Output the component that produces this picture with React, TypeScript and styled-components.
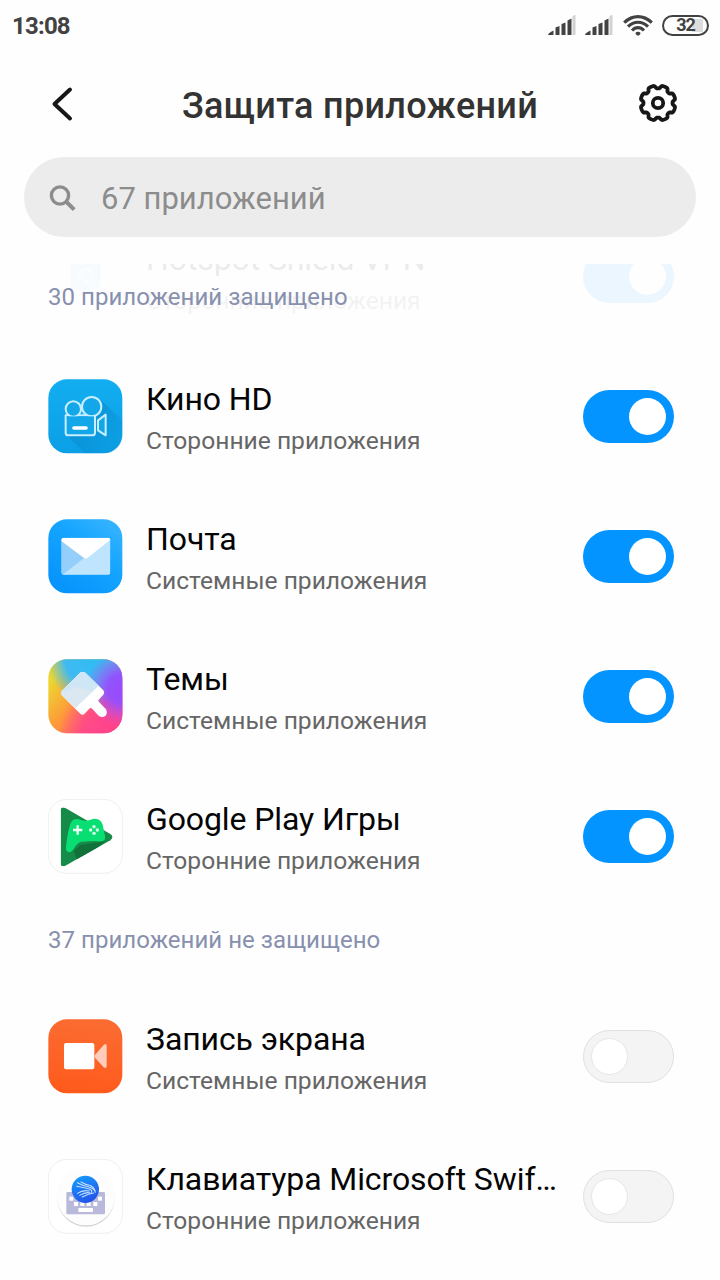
import React from 'react';
import styled, { createGlobalStyle } from 'styled-components';

const GlobalStyle = createGlobalStyle`
  *, *::before, *::after { box-sizing: border-box; }
  html, body { margin: 0; padding: 0; background: #fefefe; }
  body { font-family: Roboto, "Noto Sans", sans-serif; }
`;

const Screen = styled.main`
  width: 720px;
  height: 1280px;
  overflow: hidden;
  display: flex;
  flex-direction: column;
  background: #fefefe;
`;

const StatusBar = styled.header`
  height: 52px;
  flex: none;
  display: flex;
  align-items: center;
  justify-content: space-between;
  padding: 0 11px 0 12px;
`;

const Clock = styled.time`
  font-size: 24px;
  line-height: 28px;
  font-weight: 700;
  letter-spacing: -0.8px;
  color: #424242;
`;

const StatusIcons = styled.div`
  display: flex;
  align-items: center;
  svg { display: block; }
`;

const Signal = styled.svg`
  width: 28px;
  height: 22px;
  margin-right: 9px;
`;

const Wifi = styled.svg`
  width: 30px;
  height: 22px;
  margin: 0 9px 0 1px;
`;

const Battery = styled.div`
  width: 47px;
  height: 21px;
  margin-top: -1px;
  padding-bottom: 1px;
  border: 2px solid #424242;
  border-radius: 11px;
  display: flex;
  align-items: center;
  justify-content: center;
  font-size: 18px;
  font-weight: 700;
  line-height: 16px;
  letter-spacing: -1px;
  color: #424242;
  background: linear-gradient(#dcdcdc, #dcdcdc) 28px 2px / 11px 13px no-repeat;
`;

const TitleBar = styled.div`
  height: 105px;
  flex: none;
  display: flex;
  align-items: center;
  justify-content: space-between;
  padding: 0 40px 0 40px;
  svg { display: block; }
`;

const IconButton = styled.button<{ $lift: number }>`
  width: 44px;
  height: 44px;
  margin: 0 0 ${p => p.$lift}px;
  padding: 0;
  border: 0;
  background: none;
  display: block;
`;

const Title = styled.h1`
  margin: 3px 0 0;
  font-size: 36px;
  line-height: 44px;
  font-weight: 500;
  letter-spacing: 0.3px;
  color: #333;
  white-space: nowrap;
`;

const SearchBox = styled.div`
  flex: none;
  height: 80px;
  margin: 0 24px;
  padding: 3px 25px 0;
  border-radius: 40px;
  background: #ececec;
  display: flex;
  align-items: center;
  gap: 25px;
  font-size: 31px;
  line-height: 40px;
  color: #8c8c8c;
  svg { margin-top: -1px; }
`;

const List = styled.div`
  position: relative;
  flex: 1;
  min-height: 0;
  margin-top: 27px;
  overflow: hidden;
`;

const Rows = styled.div`
  margin-top: -58px;
`;

const SectionHeader = styled.h2<{ $pinned?: boolean }>`
  margin: 0;
  height: 80px;
  padding: 18px 48px 0;
  font-size: 24px;
  line-height: 32px;
  font-weight: 400;
  letter-spacing: 0.03px;
  color: #8790ae;
  ${p => p.$pinned && `
    position: absolute;
    z-index: 1;
    inset: 0 0 auto;
    padding-top: 17px;
    background: rgba(254, 254, 254, 0.925);
  `}
`;

const Row = styled.div`
  height: 140px;
  padding: 0 46px 0 48px;
  display: flex;
  align-items: center;
`;

const Tile = styled.svg`
  width: 75px;
  height: 75px;
  flex: none;
  display: block;
  margin-top: 1px;
`;

const Labels = styled.div`
  flex: 1;
  min-width: 0;
  margin-left: 23px;
  padding-right: 22px;
  padding-top: 3px;
`;

const Name = styled.div`
  font-size: 32px;
  line-height: 42px;
  letter-spacing: -0.1px;
  color: #050505;
  white-space: nowrap;
  overflow: hidden;
  text-overflow: ellipsis;
`;

const Kind = styled.div`
  font-size: 24.6px;
  line-height: 32px;
  margin-top: 5px;
  color: #666;
  white-space: nowrap;
`;

const Switch = styled.div<{ $on: boolean }>`
  width: 91px;
  height: 53px;
  margin-top: 1px;
  flex: none;
  display: flex;
  align-items: center;
  justify-content: ${p => (p.$on ? 'flex-end' : 'flex-start')};
  padding: 0 8px 0 7px;
  border-radius: 27px;
  background: ${p => (p.$on ? '#0394ff' : '#f4f4f4')};
  border: ${p => (p.$on ? '0' : '1px solid #e0e0e0')};
`;

const Knob = styled.span<{ $on: boolean }>`
  width: 37px;
  height: 37px;
  border-radius: 50%;
  background: #fff;
  border: ${p => (p.$on ? '0' : '1px solid #e6e6e6')};
`;

/* Launcher tiles share one 225-unit grid with a rounded square as their base. */
const Base = ({ fill, outlined }: { fill: string; outlined?: boolean }) => (
  <rect x="25" y="28" width="222" height="222" rx="56" fill={fill}
    stroke={outlined ? '#ececec' : 'none'} strokeWidth="2.5" />
);

const ShieldTile = () => (
  <Tile viewBox="24 27 225 225">
    <Base fill="#fff" />
    <path d="M91 70H182V158Q182 175 165 179L136 190L108 179Q91 175 91 158Z" fill="#a5d3fb" />
    <path d="M118 140Q120 114 142 116Q162 124 154 146Q144 158 130 152" fill="none" stroke="#d4ecff" strokeWidth="7" />
  </Tile>
);

const KinoTile = () => (
  <Tile viewBox="24 27 225 225">
    <defs>
      <linearGradient id="kino" x1="0" y1="0" x2="0" y2="1">
        <stop offset="0" stopColor="#12aef0" /><stop offset="1" stopColor="#0b9fe6" />
      </linearGradient>
      <linearGradient id="kinoShade" x1="0" y1="0" x2="1" y2="1">
        <stop offset="0" stopColor="#087fc0" stopOpacity=".7" /><stop offset="1" stopColor="#087fc0" stopOpacity="0" />
      </linearGradient>
    </defs>
    <Base fill="url(#kino)" />
    <path d="M180 88L247 151V194Q247 250 191 250H135L80 196L160 190Z" fill="url(#kinoShade)" />
    <g fill="#13a7ea" stroke="#c8efff" strokeWidth="6" strokeLinejoin="round">
      <path d="M77 136H165V188Q165 196 157 196H85Q77 196 77 188Z" />
      <circle cx="155" cy="110" r="29" />
      <circle cx="100" cy="117" r="23" />
      <path d="M174 151L197 134V196L174 181Z" />
    </g>
    <path d="M80 139H162V146H80Z" fill="#13a7ea" />
    <path d="M102 174H138" stroke="#fff" strokeWidth="11" strokeLinecap="round" />
  </Tile>
);

const MailTile = () => (
  <Tile viewBox="24 27 225 225">
    <defs>
      <linearGradient id="mail" x1=".9" y1="0" x2=".2" y2=".9">
        <stop offset="0" stopColor="#39b4ff" /><stop offset=".45" stopColor="#15a5ff" /><stop offset="1" stopColor="#0795fc" />
      </linearGradient>
      <clipPath id="envelope"><rect x="64" y="83" width="147" height="111" rx="8" /></clipPath>
    </defs>
    <Base fill="url(#mail)" />
    <g clipPath="url(#envelope)">
      <path d="M64 83H211V194H64Z" fill="#b5dffd" />
      <path d="M64 83L137 146L70 199H64Z" fill="#94cffc" />
      <path d="M211 83L68 194H211Z" fill="#bfe4fe" />
      <path d="M64 83H211V89L145 142Q137 149 129 142L64 93Z" fill="#fff" />
    </g>
  </Tile>
);

const ThemesTile = () => (
  <Tile viewBox="24 27 225 225">
    <defs>
      <linearGradient id="themes" x1="0" y1=".35" x2=".75" y2="1">
        <stop offset="0" stopColor="#edd52f" /><stop offset=".45" stopColor="#ff963b" /><stop offset="1" stopColor="#ff4589" />
      </linearGradient>
      <radialGradient id="themesBlue" cx=".6" cy="0" r=".62">
        <stop offset="0" stopColor="#2fbcf4" /><stop offset=".6" stopColor="#40baf1" /><stop offset="1" stopColor="#48baf1" stopOpacity="0" />
      </radialGradient>
      <radialGradient id="themesPurple" cx="1" cy=".4" r=".5">
        <stop offset="0" stopColor="#984aff" /><stop offset=".4" stopColor="#944fff" stopOpacity=".95" /><stop offset="1" stopColor="#bd4fea" stopOpacity="0" />
      </radialGradient>
      <radialGradient id="themesPink" cx=".9" cy="1" r=".75">
        <stop offset="0" stopColor="#ff438a" /><stop offset=".55" stopColor="#ff468c" stopOpacity=".85" /><stop offset="1" stopColor="#ff468c" stopOpacity="0" />
      </radialGradient>
      <clipPath id="brush"><path d="M120 68Q128 62 136 68L190 121Q195 128 190 134L176 149Q174 153 178 157L198 178Q204 190 196 198Q186 205 176 197L155 175Q151 173 147 177L134 191Q128 197 121 191L65 136Q60 130 65 123Z" /></clipPath>
    </defs>
    <Base fill="url(#themes)" />
    <Base fill="url(#themesPink)" />
    <Base fill="url(#themesBlue)" />
    <Base fill="url(#themesPurple)" />
    <g clipPath="url(#brush)">
      <path d="M55 55H215V210H55Z" fill="#fff" />
      <path d="M128 58L178 105L106 174L58 129Z" fill="#cfe6f7" />
      <path d="M60 129L106 174L158 124L110 110Z" fill="#dfe8f0" fillOpacity=".7" />
    </g>
  </Tile>
);

const PlayGamesTile = () => (
  <Tile viewBox="24 27 225 225">
    <defs>
      <clipPath id="playTriangle"><path d="M62 62Q62 48 76 54L211 132Q224 141 211 151L76 227Q62 233 62 219Z" /></clipPath>
    </defs>
    <Base fill="#fff" outlined />
    <g clipPath="url(#playTriangle)">
      <path d="M55 45H225V235H55Z" fill="#168a48" />
      <path d="M101 184L120 165L196 154L165 180L112 210Z" fill="#107239" />
    </g>
    <path d="M103 88Q113 85 121 89Q136 95 152 89Q162 84 173 88Q184 92 188 104L195 137Q198 153 183 154Q174 155 165 153Q151 154 126 155Q114 157 105 170Q96 187 86 187Q76 185 78 169Q82 132 90 105Q94 91 103 88Z" fill="#08de72" />
    <path d="M113 106V134M99 120H127" stroke="#effff3" strokeWidth="7" />
    <g fill="#dffff0">
      <circle cx="162" cy="110" r="5" /><circle cx="152" cy="120" r="5" />
      <circle cx="172" cy="120" r="5" /><circle cx="162" cy="130" r="5" />
    </g>
  </Tile>
);

const RecorderTile = () => (
  <Tile viewBox="24 27 225 225">
    <defs>
      <linearGradient id="recorder" x1=".6" y1="0" x2=".5" y2="1">
        <stop offset="0" stopColor="#fb6c32" /><stop offset="1" stopColor="#ff5a1c" />
      </linearGradient>
    </defs>
    <Base fill="url(#recorder)" />
    <rect x="72" y="99" width="91" height="79" rx="6" fill="#fff" />
    <path d="M165 135L191 105Q199 98 200 107V169Q199 178 191 172L165 143Q162 139 165 135Z" fill="#ffcdb9" />
  </Tile>
);

const SwiftKeyTile = () => (
  <Tile viewBox="24 27 225 225">
    <defs>
      <linearGradient id="swift" x1=".3" y1="0" x2=".7" y2="1">
        <stop offset="0" stopColor="#1598fc" /><stop offset="1" stopColor="#2550e8" />
      </linearGradient>
    </defs>
    <Base fill="#fff" outlined />
    <circle cx="138" cy="144" r="86" fill="#d3d3d6" />
    <circle cx="138" cy="139" r="87" fill="#fdfdfd" />
    <rect x="79" y="126" width="116" height="67" rx="4" fill="#b9badb" />
    <g fill="#fff">
      <rect x="88" y="140" width="12" height="12" /><rect x="174" y="140" width="12" height="12" />
      <rect x="102" y="156" width="12" height="12" /><rect x="121" y="156" width="12" height="12" />
      <rect x="140" y="156" width="12" height="12" /><rect x="160" y="156" width="12" height="12" />
      <rect x="115" y="174" width="44" height="12" rx="2" />
    </g>
    <circle cx="136" cy="118" r="41" fill="url(#swift)" />
    <g fill="none" stroke="#c4dfff" strokeWidth="3.2" strokeLinecap="round">
      <path d="M112 98Q128 107 145 110Q158 113 165 122" />
      <path d="M123 96Q134 103 148 106Q163 110 166 127" />
      <path d="M110 109Q130 113 148 117Q157 120 155 127" />
      <path d="M112 130Q129 119 148 123" />
      <path d="M119 136Q137 125 151 129" />
      <path d="M127 141Q146 131 161 129" />
    </g>
  </Tile>
);

const SignalIcon = () => (
  <Signal viewBox="0 0 28 22">
    <path d="M0 20Q0 18 5.5 15.5V20Z" fill="#424242" />
    <path d="M7.5 12.5L11.5 11V20H7.5ZM13.5 9L17.5 7.5V20H13.5ZM19.5 5.5L23.5 3.5V20H19.5Z" fill="#424242" />
    <path d="M24.5 2Q24.5 0 27.5 0V20H24.5Z" fill="#d2d2d2" />
  </Signal>
);

const WifiIcon = () => (
  <Wifi viewBox="0 0 30 22">
    <g fill="none" stroke="#424242" strokeWidth="3.1">
      <path d="M1.2 7.6Q7.5 1.6 15 1.6Q22.5 1.6 28.8 7.6" />
      <path d="M5 11.6Q9.3 7.2 15 7.2Q20.7 7.2 25 11.6" />
      <path d="M9 15.5Q11.7 12.6 15 12.6Q18.3 12.6 21 15.5" />
    </g>
    <path d="M12.3 18Q15 15.5 17.7 18Q16.8 20.5 15 20.8Q13.2 20.5 12.3 18Z" fill="#424242" />
  </Wifi>
);

const BackIcon = () => (
  <svg width="44" height="44" viewBox="0 0 44 44" fill="none" stroke="#171717"
    strokeWidth="4" strokeLinecap="round" strokeLinejoin="round">
    <path d="M30 7.5L14.5 22L30 36.5" />
  </svg>
);

const gearOutline = (() => {
  let d = '';
  const steps = 160;
  for (let i = 0; i < steps; i++) {
    const angle = (i / steps) * Math.PI * 2;
    const wave = Math.cos(8 * angle);
    const radius = 16 - 1.6 * Math.tanh(2.4 * (wave - 0.35));
    d += `${i ? 'L' : 'M'}${(22 + radius * Math.cos(angle)).toFixed(2)} ${(22 + radius * Math.sin(angle)).toFixed(2)}`;
  }
  return d + 'Z';
})();

const GearIcon = () => (
  <svg width="44" height="44" viewBox="0 0 44 44" fill="none" stroke="#171717"
    strokeWidth="3.8" strokeLinejoin="round">
    <path d={gearOutline} />
    <circle cx="22" cy="22" r="5.2" />
  </svg>
);

const SearchIcon = () => (
  <svg width="27" height="27" viewBox="0 0 27 27" fill="none" stroke="#8c8c8c" strokeWidth="3.4">
    <circle cx="11" cy="10.5" r="8.6" />
    <path d="M17 16.5L25.2 24.7" strokeWidth="4" />
  </svg>
);

interface AppRowProps {
  tile: React.ReactNode;
  name: string;
  kind: string;
  on?: boolean;
}

const AppRow = ({ tile, name, kind, on = false }: AppRowProps) => (
  <Row>
    {tile}
    <Labels>
      <Name>{name}</Name>
      <Kind>{kind}</Kind>
    </Labels>
    <Switch $on={on} role="switch" aria-checked={on}><Knob $on={on} /></Switch>
  </Row>
);

const SYSTEM = 'Системные приложения';
const THIRD_PARTY = 'Сторонние приложения';

export default function App() {
  return (
    <>
      <GlobalStyle />
      <Screen>
        <StatusBar>
          <Clock>13:08</Clock>
          <StatusIcons>
            <SignalIcon />
            <SignalIcon />
            <WifiIcon />
            <Battery>32</Battery>
          </StatusIcons>
        </StatusBar>
        <TitleBar>
          <IconButton $lift={1}><BackIcon /></IconButton>
          <Title>Защита приложений</Title>
          <IconButton $lift={3}><GearIcon /></IconButton>
        </TitleBar>
        <SearchBox><SearchIcon />67 приложений</SearchBox>
        <List>
          <SectionHeader $pinned>30 приложений защищено</SectionHeader>
          <Rows>
            <AppRow tile={<ShieldTile />} name="Hotspot Shield VPN" kind={THIRD_PARTY} on />
            <AppRow tile={<KinoTile />} name="Кино HD" kind={THIRD_PARTY} on />
            <AppRow tile={<MailTile />} name="Почта" kind={SYSTEM} on />
            <AppRow tile={<ThemesTile />} name="Темы" kind={SYSTEM} on />
            <AppRow tile={<PlayGamesTile />} name="Google Play Игры" kind={THIRD_PARTY} on />
            <SectionHeader>37 приложений не защищено</SectionHeader>
            <AppRow tile={<RecorderTile />} name="Запись экрана" kind={SYSTEM} />
            <AppRow tile={<SwiftKeyTile />} name="Клавиатура Microsoft SwiftKey" kind={THIRD_PARTY} />
          </Rows>
        </List>
      </Screen>
    </>
  );
}
